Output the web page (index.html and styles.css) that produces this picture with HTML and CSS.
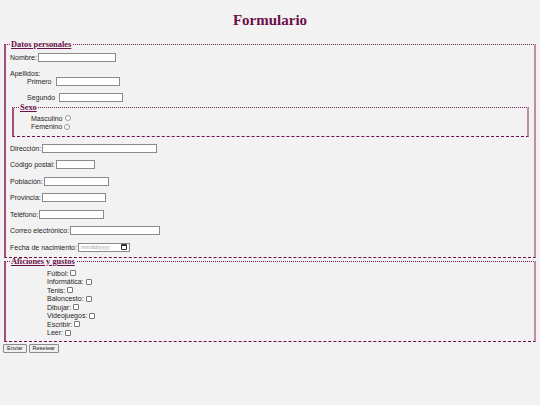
FILE: index.html
```html
<!DOCTYPE html>
<html lang="es">
<head>
<meta charset="utf-8">
<title>Formulario</title>
<link rel="stylesheet" href="styles.css">
</head>
<body>
<h1 class="title">Formulario</h1>
<form class="form">
  <fieldset class="box main">
    <legend class="legend">Datos personales</legend>
    <div class="row first"><label>Nombre:</label><input class="inp" style="width:78px"></div>
    <div class="row label-only"><span>Apellidos:</span></div>
    <div class="row sub"><label>Primero</label><input class="inp" style="width:64px"></div>
    <div class="row sub last-sub"><label>Segundo</label><input class="inp" style="width:64px"></div>
    <fieldset class="box sexo">
      <legend class="legend">Sexo</legend>
      <div class="radio-row"><label>Masculino</label><span class="radio"></span></div>
      <div class="radio-row"><label>Femenino</label><span class="radio"></span></div>
    </fieldset>
    <div class="row"><label>Dirección:</label><input class="inp" style="width:115px"></div>
    <div class="row"><label>Código postal:</label><input class="inp" style="width:39px"></div>
    <div class="row"><label>Población:</label><input class="inp" style="width:65px"></div>
    <div class="row"><label>Provincia:</label><input class="inp" style="width:64px"></div>
    <div class="row"><label>Teléfono:</label><input class="inp" style="width:65px"></div>
    <div class="row"><label>Correo electrónico:</label><input class="inp" style="width:90px"></div>
    <div class="row last"><label>Fecha de nacimiento:</label><span class="date"><span class="date-text">mm/dd/yyyy</span><span class="cal"></span></span></div>
  </fieldset>
  <fieldset class="box hobbies">
    <legend class="legend">Aficiones y gustos</legend>
    <div class="check-row"><label>Fútbol:</label><span class="check"></span></div>
    <div class="check-row"><label>Informática:</label><span class="check"></span></div>
    <div class="check-row"><label>Tenis:</label><span class="check"></span></div>
    <div class="check-row"><label>Baloncesto:</label><span class="check"></span></div>
    <div class="check-row"><label>Dibujar:</label><span class="check"></span></div>
    <div class="check-row"><label>Videojuegos:</label><span class="check"></span></div>
    <div class="check-row"><label>Escribir:</label><span class="check"></span></div>
    <div class="check-row"><label>Leer:</label><span class="check"></span></div>
  </fieldset>
  <div class="buttons">
    <button type="button" class="btn">Enviar</button>
    <button type="button" class="btn">Resetear</button>
  </div>
</form>
</body>
</html>
```

FILE: styles.css
```css
html, body {
  margin: 0;
  padding: 0;
}
body {
  background: #f2f2f2;
  font-family: "Liberation Sans", Arial, sans-serif;
  font-size: 7px;
  color: #1e1e1e;
  padding: 0 4px;
}
.title {
  font-family: "Liberation Serif", "Times New Roman", serif;
  font-weight: bold;
  font-size: 15px;
  color: #6b0f4a;
  text-align: center;
  margin: 0;
  padding-top: 12px;
  height: 28px;
  line-height: 17px;
}
.form {
  margin: 0;
}
.box {
  margin: 0;
  border-width: 1px 2px 1px 2px;
  border-style: dotted solid dashed solid;
  border-color: #7a1a55 #c08ca8 #6b0f4a #a0507c;
  min-width: 0;
}
.legend {
  font-family: "Liberation Serif", "Times New Roman", serif;
  font-weight: bold;
  font-size: 8.4px;
  line-height: 9px;
  color: #6b0f4a;
  text-decoration: underline;
  padding: 0 1px;
  margin-left: 0;
}
.main {
  padding: 0 4px 5px 4px;
}
.row {
  display: flex;
  align-items: center;
  gap: 1px;
  height: 10px;
  margin: 2px 0 6.5px;
  white-space: nowrap;
}
.row.first {
  margin-top: 3px;
}
.row.label-only {
  margin-bottom: -4px;
}
.row.sub {
  padding-left: 17px;
  gap: 4px;
  margin-bottom: 5.5px;
}
.row.last-sub {
  margin-bottom: 1px;
}
.row.last {
  margin-bottom: 0;
}
.inp {
  height: 9px;
  box-sizing: border-box;
  border: 1px solid #8a8a8a;
  background: #fff;
  padding: 0;
  margin: 0;
  font-size: 6px;
}
.sexo {
  margin: 0 1px 6px 2px;
  padding: 2px 5px 5px 5px;
}
.sexo .radio-row {
  margin-left: 12px;
}
.radio-row, .check-row {
  display: flex;
  align-items: center;
  gap: 2px;
  height: 8.5px;
  white-space: nowrap;
}
.radio {
  width: 4px;
  height: 4px;
  border: 1px solid #999;
  border-radius: 50%;
  background: #fff;
}
.check {
  width: 4px;
  height: 4px;
  border: 1px solid #777;
  border-radius: 1px;
  background: #fff;
}
.date {
  display: inline-flex;
  align-items: center;
  justify-content: space-between;
  width: 52px;
  height: 9px;
  box-sizing: border-box;
  border: 1px solid #8a8a8a;
  background: #fff;
  padding: 0 2px;
}
.date-text {
  font-size: 5px;
  color: #999;
  letter-spacing: 0.2px;
}
.cal {
  width: 4px;
  height: 3px;
  border: 1px solid #333;
  border-top-width: 2px;
  border-radius: 1px;
}
.hobbies {
  margin-top: -1px;
  padding: 3px 4px 4px 4px;
}
.hobbies .check-row {
  margin-left: 37px;
}
.buttons {
  display: flex;
  gap: 2px;
  margin-top: 2px;
  margin-left: -1px;
}
.btn {
  font-family: "Liberation Sans", Arial, sans-serif;
  font-size: 5.5px;
  height: 9px;
  padding: 0 3px;
  border: 1px solid #8a8a8a;
  border-radius: 1px;
  background: #efefef;
  color: #222;
  line-height: 7px;
}
```
